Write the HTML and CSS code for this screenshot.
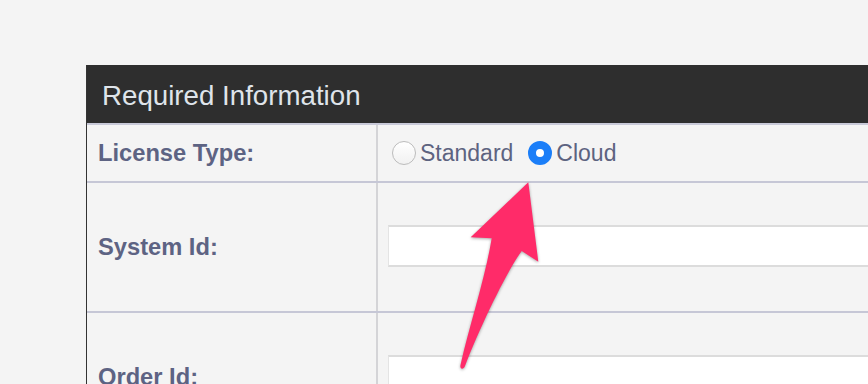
FILE: index.html
```html
<!DOCTYPE html>
<html lang="en">
<head>
    <meta charset="UTF-8">
    <meta name="viewport" content="width=device-width, initial-scale=1.0">
    <title>License Registration</title>
    <link rel="stylesheet" href="styles.css">
</head>
<body>

<div class="form-table">
    <div class="table-header">Required Information</div>

    <div class="form-row short">
        <div class="label-cell">License Type:</div>
        <div class="field-cell">
            <label class="radio-option"><input type="radio" name="license" value="standard"> Standard</label>
            <label class="radio-option"><input type="radio" name="license" value="cloud" checked> Cloud</label>
        </div>
    </div>

    <div class="form-row">
        <div class="label-cell">System Id:</div>
        <div class="field-cell"><input type="text" class="text-input"></div>
    </div>

    <div class="form-row">
        <div class="label-cell">Order Id:</div>
        <div class="field-cell"><input type="text" class="text-input"></div>
    </div>
</div>

<!-- annotation arrow -->
<svg class="arrow" width="120" height="210" viewBox="0 0 120 210">
    <path d="M88.3 7.3 L98.3 86.7 L81.7 76 C67 96 40 152 25 191 C23.5 195 19.5 194.5 20.5 190 C29 152 45 104 51.7 63.3 L30.7 62.3 Z" fill="#ff2b69"/>
</svg>

</body>
</html>
```

FILE: styles.css
```css
body {
    margin: 0;
    padding: 65px 0 0 86px;
    background-color: #f4f4f4;
    font-family: "Liberation Sans", Arial, sans-serif;
    overflow: hidden;
    position: relative;
}

.form-table {
    width: 900px;
    border-left: 1px solid #333;
}

.table-header {
    height: 58px;
    line-height: 62px;
    padding-left: 15px;
    background-color: #2e2e2e;
    color: #dfe4ea;
    font-size: 27.7px;
    border-bottom: 2px solid #c8c9d8;
}

.form-row {
    display: grid;
    grid-template-columns: 291px 1fr;
    height: 128px;
    border-bottom: 2px solid #c6c7d6;
}

.form-row.short {
    height: 56px;
}

.label-cell {
    display: flex;
    align-items: center;
    padding-left: 11px;
    border-right: 2px solid #d4d4d7;
    color: #5d6383;
    font-weight: bold;
    font-size: 23.7px;
}

.field-cell {
    display: flex;
    align-items: center;
    padding-left: 10px;
}

.radio-option {
    display: flex;
    align-items: center;
    gap: 4px;
    margin-right: 11px;
    font-size: 23px;
    color: #5d6380;
}

.radio-option input {
    appearance: none;
    -webkit-appearance: none;
    margin: 0 0 0 4px;
    width: 24px;
    height: 24px;
    border-radius: 50%;
    border: 1px solid #bcbcbc;
    background: linear-gradient(#ffffff, #f1f1f1);
}

.radio-option input:checked {
    border: 8px solid #1b7ef8;
    background: #fff;
}

.text-input {
    width: 600px;
    height: 36px;
    margin-top: -2px;
    border: 1px solid #e4e4e4;
    border-top: 2px solid #dcdcdc;
    border-bottom: 2px solid #dcdcdc;
    background-color: #fff;
}

.arrow {
    position: absolute;
    left: 440px;
    top: 175px;
    filter: drop-shadow(0 1px 1.5px rgba(0, 0, 0, 0.35));
}
```
